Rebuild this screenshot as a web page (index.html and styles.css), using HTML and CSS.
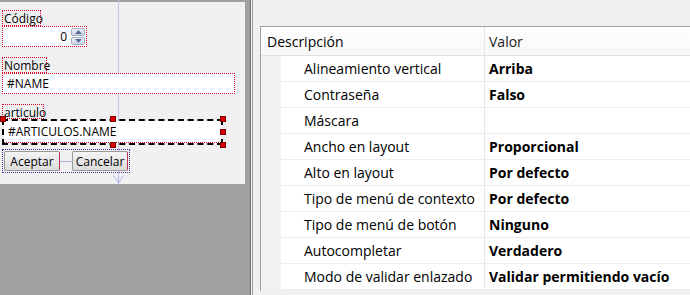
FILE: index.html
```html
<!DOCTYPE html>
<html lang="es">
<head>
<meta charset="utf-8">
<title>Diseñador</title>
<link rel="stylesheet" href="styles.css">
</head>
<body>
<div class="left-pane">
  <div class="canvas">
    <div class="guide"><svg class="guide-arrow" width="11" height="9" viewBox="0 0 11 9"><path d="M0.5 0.5 L5.5 8 L10.5 0.5" fill="none" stroke="#b4b4ee" stroke-width="1"/><path d="M5.5 0 L5.5 8" stroke="#b4b4ee" stroke-width="1"/></svg></div>
    <div class="lbl lbl-codigo">Código</div>
    <div class="spin">
      <div class="spin-field">0</div>
      <div class="spin-btns">
        <div class="spin-btn"><svg width="7" height="4" viewBox="0 0 7 4"><path d="M0 4 L3.5 0 L7 4 Z" fill="#5a6a98"/></svg></div>
        <div class="spin-btn"><svg width="7" height="4" viewBox="0 0 7 4"><path d="M0 0 L3.5 4 L7 0 Z" fill="#5a6a98"/></svg></div>
      </div>
    </div>
    <div class="lbl lbl-nombre">Nombre</div>
    <div class="field field-nombre"><span>#NAME</span></div>
    <div class="lbl lbl-articulo">articulo</div>
    <div class="selected">
      <div class="field field-articulo"><span>#ARTICULOS.NAME</span></div>
      <span class="handle h-tl"></span>
      <span class="handle h-tm"></span>
      <span class="handle h-tr"></span>
      <span class="handle h-mr"></span>
      <span class="handle h-br"></span>
      <span class="handle h-bm"></span>
    </div>
    <div class="btn-group">
      <div class="btn">Aceptar</div>
      <div class="connector"></div>
      <div class="btn">Cancelar</div>
    </div>
  </div>
</div>
<div class="splitter"></div>
<div class="right-pane">
  <div class="grid">
    <div class="grid-head">
      <div class="hcell hcell-desc">Descripción</div>
      <div class="hcell hcell-val">Valor</div>
    </div>
    <div class="grid-body">
      <div class="row"><div class="gutter"></div><div class="desc">Alineamiento vertical</div><div class="val">Arriba</div></div>
      <div class="row"><div class="gutter"></div><div class="desc">Contraseña</div><div class="val">Falso</div></div>
      <div class="row"><div class="gutter"></div><div class="desc">Máscara</div><div class="val"></div></div>
      <div class="row"><div class="gutter"></div><div class="desc">Ancho en layout</div><div class="val">Proporcional</div></div>
      <div class="row"><div class="gutter"></div><div class="desc">Alto en layout</div><div class="val">Por defecto</div></div>
      <div class="row"><div class="gutter"></div><div class="desc">Tipo de menú de contexto</div><div class="val">Por defecto</div></div>
      <div class="row"><div class="gutter"></div><div class="desc">Tipo de menú de botón</div><div class="val">Ninguno</div></div>
      <div class="row"><div class="gutter"></div><div class="desc">Autocompletar</div><div class="val">Verdadero</div></div>
      <div class="row"><div class="gutter"></div><div class="desc">Modo de validar enlazado</div><div class="val">Validar permitiendo vacío</div></div>
    </div>
  </div>
</div>
</body>
</html>
```
FILE: styles.css
```css
* { box-sizing: border-box; }
html, body { margin: 0; padding: 0; }
body {
  width: 690px;
  height: 295px;
  overflow: hidden;
  display: flex;
  background: #f0f0f0;
  font-family: "Open Sans", "Noto Sans", sans-serif;
  color: #000;
}

/* ---------- left designer pane ---------- */
.left-pane {
  width: 250px;
  flex: none;
  background: #a0a0a0;
  padding-top: 2px;
}
.canvas {
  position: relative;
  width: 245px;
  height: 182px;
  background: #f0f0f0;
  padding: 8px 0 0 2px;
  font-size: 12px;
  line-height: 13px;
}
.guide {
  position: absolute;
  left: 118px;
  top: -2px;
  width: 1px;
  height: 184px;
  background: #c4c4f2;
}
.guide-arrow {
  position: absolute;
  left: -5px;
  bottom: 0;
}
.lbl {
  position: relative;
  display: inline-block;
  border: 1px dotted #d4002a;
  padding: 0 1px;
  height: 16px;
  line-height: 15px;
}
.lbl-codigo { width: 39px; }
.lbl-nombre { width: 45px; margin-top: 10px; }
.lbl-articulo { width: 42px; margin-top: 10px; height: 15px; }

.spin {
  position: relative;
  display: flex;
  width: 85px;
  height: 21px;
  border: 1px dotted #d4002a;
  background: #fff;
  padding: 1px;
}
.spin-field {
  flex: 1;
  text-align: right;
  padding-right: 4px;
  line-height: 18px;
}
.spin-btns {
  width: 14px;
  display: flex;
  flex-direction: column;
  gap: 1px;
}
.spin-btn {
  flex: 1;
  display: flex;
  align-items: center;
  justify-content: center;
  background: linear-gradient(#eef1f8, #cfd6e6);
  border: 1px solid #a6aec4;
  border-radius: 2px;
}
.field {
  position: relative;
  background: #fff;
  border: 1px dotted #d4002a;
  display: flex;
  align-items: center;
  padding-left: 4px;
}
.field-nombre {
  width: 233px;
  height: 21px;
}
.selected {
  position: relative;
  width: 221px;
  height: 26px;
  border: 2px dashed #000;
}
.field-articulo {
  width: 100%;
  height: 100%;
  border-bottom: 1px dotted #d4002a;
  border-top: none;
  border-left: none;
  border-right: none;
}
.handle {
  position: absolute;
  width: 6px;
  height: 6px;
  background: #e00000;
  border: 1px solid #7a0000;
}
.h-tl { left: -4px; top: -5px; }
.h-tm { left: 106px; top: -5px; }
.h-tr { right: -5px; top: -5px; }
.h-mr { right: -5px; top: 8px; }
.h-br { right: -5px; bottom: -5px; }
.h-bm { left: 106px; bottom: -5px; }

.btn-group {
  position: relative;
  margin-top: 4px;
  width: 128px;
  height: 24px;
  border: 1px dotted #5028a0;
  padding: 1px;
  display: flex;
  align-items: stretch;
}
.btn {
  width: 56px;
  display: flex;
  align-items: center;
  justify-content: center;
  background: linear-gradient(#f4f4f4, #dcdcdc);
  border: 1px solid #9a9a9a;
  border-right-color: #c03050;
  border-radius: 2px;
  font-size: 12px;
}
.connector {
  width: 12px;
  align-self: center;
  height: 1px;
  background: #b0b0d8;
}

/* ---------- splitter ---------- */
.splitter {
  width: 3px;
  flex: none;
  border-left: 1px solid #6e6e6e;
  border-right: 1px solid #9a9a9a;
  background: #f4f4f4;
}

/* ---------- property grid ---------- */
.right-pane {
  flex: 1;
  padding: 26px 0 0 7px;
  background: #f0f0f0;
}
.grid {
  height: 265px;
  border-top: 1px solid #a0a0a0;
  border-left: 1px solid #a0a0a0;
  background: #f0f0f0;
  font-size: 14px;
}
.grid-head {
  display: flex;
  height: 29px;
  background: linear-gradient(#ffffff, #f7f7f7);
  border-bottom: 1px solid #e2e2e2;
}
.hcell {
  display: flex;
  align-items: center;
}
.hcell-desc {
  width: 224px;
  padding-left: 6px;
  border-right: 1px solid #e6e6e6;
}
.hcell-val {
  flex: 1;
  padding-left: 4px;
  color: #1a1a1a;
}
.grid-body {
  background: #fff;
}
.row {
  display: flex;
  height: 26px;
}
.gutter {
  width: 20px;
  background: #f2f2f2;
}
.desc {
  width: 204px;
  padding-left: 23px;
  display: flex;
  align-items: center;
  border-bottom: 1px solid #ededed;
  border-right: 1px solid #e6e6ee;
  white-space: nowrap;
}
.val {
  flex: 1;
  padding-left: 4px;
  display: flex;
  align-items: center;
  font-weight: 700;
  border-bottom: 1px solid #ededed;
  white-space: nowrap;
}
```
